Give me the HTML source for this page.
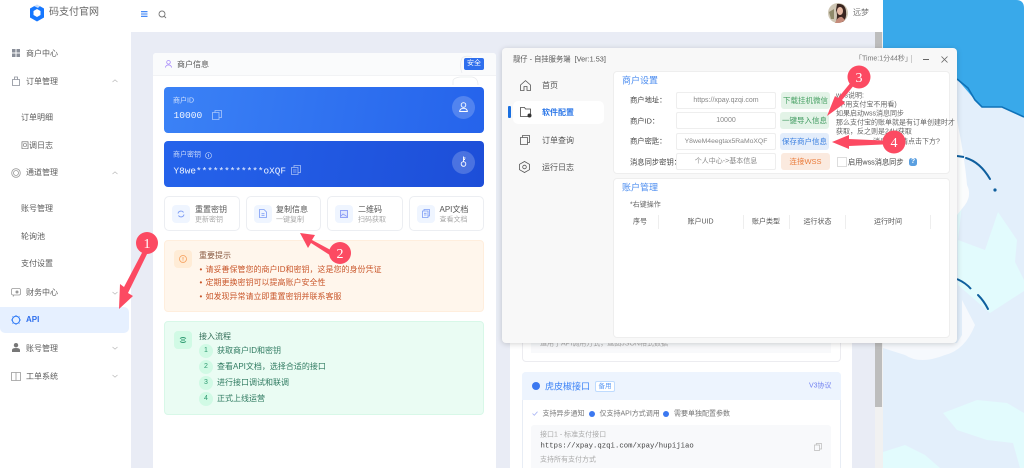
<!DOCTYPE html>
<html lang="zh"><head><meta charset="utf-8"><title>码支付官网</title>
<style>
*{box-sizing:border-box;margin:0;padding:0}
html,body{width:1024px;height:468px;overflow:hidden;background:#fff}
body{font-family:"Liberation Sans","Noto Sans CJK SC",sans-serif;position:relative;color:#555}
#w{position:absolute;left:0;top:0;width:1024px;height:468px;overflow:hidden;filter:blur(.3px)}
.a{position:absolute}
.t{position:absolute;white-space:nowrap;line-height:1;transform:translateY(-50%);font-size:8px}
.c{transform:translate(-50%,-50%);text-align:center}
.m{font-family:"Liberation Mono","Noto Sans CJK SC",monospace}
.n{color:#5c5c5c}
svg{position:absolute;overflow:visible}
.btn{position:absolute;top:196px;height:35px;background:#fff;border:1px solid #eceef2;border-radius:5px}
.sq{position:absolute;top:205px;width:18px;height:18px;background:#eff5ff;border-radius:4px}
.in{position:absolute;left:676px;width:100px;height:17px;background:#fff;border:1px solid #eeeeee;border-radius:2px;font-size:7px;color:#888;text-align:center;line-height:16px;white-space:nowrap;overflow:hidden}
.b{position:absolute;width:49px;height:17px;border-radius:3px;font-size:7.5px;text-align:center;line-height:17px;white-space:nowrap}
.num{position:absolute;left:199px;width:14px;height:14px;border-radius:50%;background:#d1fae5;color:#2c9a70;font-size:7px;line-height:14px;text-align:center}
</style></head><body><div id="w">

<!-- desktop background -->
<svg style="left:883px;top:0" width="141" height="468" viewBox="883 0 141 468">
<path d="M883 0H1016Q1024 0 1024 8V468H883Z" fill="#e3effb"/>
<path d="M883 0H1016Q1024 0 1024 8V117L1002 107H982L975 100L957 79H883Z" fill="#39a9ea"/>
<path d="M957 79L968 88L975 100L982 107L1002 107L1024 117" fill="none" stroke="#0f72b8" stroke-width="1.6"/>
<path d="M957 160Q965 185 962 205L958 240L985 250L998 212L1017 240L1015 262L1024 280V291L990 313L958 285Z" fill="#e2fbfd"/>
<path d="M957 120Q965 160 967 185Q972 195 965 205L957 215Z" fill="#fbfcfd"/>
<path d="M883 343H957L962 335L962 300L975 325Q965 350 945 355Q920 365 905 355L883 348Z" fill="#f6f9fd"/>
<path d="M943 413L977 400L1007 403L1024 413V468H1020L1013 443L987 440L957 430Z" fill="#e2fbfd"/>
<path d="M883 452L905 445L925 455L940 468H883Z" fill="#e2fbfd"/>
<path d="M957 156L964 157" stroke="#0f5f9e" stroke-width="2" fill="none"/>
<path d="M966 158Q980 162 990 179" stroke="#0f5f9e" stroke-width="2" fill="none" stroke-linecap="round"/>
<circle cx="995" cy="190" r="1.6" fill="#0f5f9e"/>
<path d="M957 279Q966 283 971 289" stroke="#0f5f9e" stroke-width="2" fill="none"/>
<path d="M978 295Q984 301 988 309" stroke="#0f5f9e" stroke-width="2" fill="none" stroke-linecap="round"/>
</svg>

<!-- app chrome -->
<div class="a" style="left:131px;top:32px;width:752px;height:436px;background:#e9ecf5"></div>
<div class="a" style="left:875px;top:32px;width:8px;height:436px;background:#f1f1f1"></div>
<div class="a" style="left:875px;top:32px;width:7px;height:375px;background:#bdbdbd"></div>
<div class="a" style="left:0;top:0;width:883px;height:32px;background:#fff"></div>
<div class="a" style="left:0;top:0;width:131px;height:468px;background:#fff"></div>

<!-- logo -->
<svg style="left:29px;top:4px" width="16" height="18" viewBox="0 0 16 18"><path d="M8 0.5L15 4.500V13.500L8 17.500L1 13.500V4.500Z" fill="#1677ff"/><path d="M8 5L11.500 7V11L8 13L4.500 11V7Z" fill="#fff"/><path d="M8 0L11 2L9 4L5 2Z" fill="#fff" opacity=".75"/></svg>
<div class="t" style="left:49px;top:13px;font-size:10px;color:#666">码支付官网</div>
<svg style="left:141px;top:11px" width="7" height="6" viewBox="0 0 7 6"><path d="M0 .7H6.500M0 3H6.500M0 5.300H6.500" stroke="#2f7bf6" stroke-width="1.100"/></svg>
<svg style="left:158px;top:10px" width="9" height="9" viewBox="0 0 9 9"><circle cx="4" cy="4" r="3" fill="none" stroke="#777" stroke-width=".9"/><path d="M6.200 6.200L8 8" stroke="#777" stroke-width=".9"/></svg>

<!-- avatar -->
<svg style="left:828px;top:3px" width="20" height="20" viewBox="0 0 20 20"><circle cx="10" cy="10" r="10" fill="#cfc7b5"/><path d="M9 1Q17 0 18 8Q19 15 15 19L8 19Q10 12 8 7Z" fill="#3a2620"/><ellipse cx="12" cy="8" rx="3" ry="4" fill="#e8bba5"/><path d="M7 20Q10 13 14 14L17 17Q14 20 10 20Z" fill="#c58b7a"/><path d="M1 9L6 6V16L3 16Z" fill="#8f8a6a"/></svg>
<div class="t" style="left:853px;top:13px;color:#777">远梦</div>

<!-- sidebar -->
<svg style="left:12px;top:49px" width="8" height="8" viewBox="0 0 8 8"><path d="M0 0H3.500V3.500H0ZM4.500 0H8V3.500H4.500ZM0 4.500H3.500V8H0ZM4.500 4.500H8V8H4.500Z" fill="#8a8f99"/></svg>
<div class="t n" style="left:26px;top:53.500px">商户中心</div>
<svg style="left:12px;top:76px" width="8" height="10" viewBox="0 0 8 10"><path d="M.5 3.500H7.500V9.500H.5ZM2.500 3.500V1H5.500V3.500" fill="none" stroke="#8a8f99" stroke-width=".8"/></svg>
<div class="t n" style="left:26px;top:81.500px">订单管理</div>
<svg style="left:112px;top:79px" width="6" height="4" viewBox="0 0 6 4"><path d="M.5 3L3 .8L5.500 3" fill="none" stroke="#bbb" stroke-width=".7"/></svg>
<div class="t n" style="left:21px;top:117.500px">订单明细</div>
<div class="t n" style="left:21px;top:145.500px">回调日志</div>
<svg style="left:11px;top:168px" width="10" height="10" viewBox="0 0 10 10"><circle cx="5" cy="5" r="4.300" fill="none" stroke="#999" stroke-width=".8"/><circle cx="5" cy="5" r="2.500" fill="none" stroke="#999" stroke-width=".8"/></svg>
<div class="t n" style="left:26px;top:173px">通道管理</div>
<svg style="left:112px;top:171px" width="6" height="4" viewBox="0 0 6 4"><path d="M.5 3L3 .8L5.500 3" fill="none" stroke="#bbb" stroke-width=".7"/></svg>
<div class="t n" style="left:21px;top:208.500px">账号管理</div>
<div class="t n" style="left:21px;top:236.500px">轮询池</div>
<div class="t n" style="left:21px;top:264px">支付设置</div>
<svg style="left:11px;top:288px" width="10" height="9" viewBox="0 0 10 9"><rect x=".5" y=".5" width="9" height="6.500" rx="1.500" fill="none" stroke="#999" stroke-width=".8"/><circle cx="6" cy="4" r="1.500" fill="#999"/><path d="M3 7L2 8.500" stroke="#999" stroke-width=".8"/></svg>
<div class="t n" style="left:26px;top:292.500px">财务中心</div>
<svg style="left:112px;top:291px" width="6" height="4" viewBox="0 0 6 4"><path d="M.5 1L3 3.200L5.500 1" fill="none" stroke="#bbb" stroke-width=".7"/></svg>
<div class="a" style="left:0;top:307px;width:129px;height:26px;background:#e6f0ff;border-radius:0 5px 5px 5px"></div>
<svg style="left:11px;top:315px" width="10" height="10" viewBox="0 0 10 10"><circle cx="5" cy="5" r="3.700" fill="none" stroke="#2f7bf6" stroke-width="1"/><path d="M5 0V1.300M5 8.700V10M0 5H1.300M8.700 5H10M1.500 1.500L2.400 2.400M7.600 7.600L8.500 8.500M8.500 1.500L7.600 2.400M2.400 7.600L1.500 8.500" stroke="#2f7bf6" stroke-width=".8"/></svg>
<div class="t" style="left:26px;top:320px;color:#2f6fed;font-weight:bold">API</div>
<svg style="left:12px;top:343px" width="8" height="9" viewBox="0 0 8 9"><circle cx="4" cy="2.200" r="2.200" fill="#777"/><path d="M0 9V7Q0 5 4 5Q8 5 8 7V9Z" fill="#777"/></svg>
<div class="t n" style="left:26px;top:348.500px">账号管理</div>
<svg style="left:112px;top:346px" width="6" height="4" viewBox="0 0 6 4"><path d="M.5 1L3 3.200L5.500 1" fill="none" stroke="#bbb" stroke-width=".7"/></svg>
<svg style="left:11px;top:372px" width="10" height="9" viewBox="0 0 10 9"><path d="M.5 .5H9.500V8.500H.5ZM5 .5V8.500" fill="none" stroke="#999" stroke-width=".8"/></svg>
<div class="t n" style="left:26px;top:376.500px">工单系统</div>
<svg style="left:112px;top:374px" width="6" height="4" viewBox="0 0 6 4"><path d="M.5 1L3 3.200L5.500 1" fill="none" stroke="#bbb" stroke-width=".7"/></svg>

<!-- merchant card -->
<div class="a" style="left:153px;top:53px;width:343px;height:415px;background:#fff;border-radius:3px 3px 0 0"></div>
<div class="a" style="left:153px;top:53px;width:343px;height:23px;background:#fafbfc;border-bottom:1px solid #f2f3f5;border-radius:3px 3px 0 0"></div>
<svg style="left:165px;top:60px" width="7" height="8" viewBox="0 0 7 8"><circle cx="3.500" cy="2.300" r="1.800" fill="none" stroke="#a78bfa" stroke-width=".8"/><path d="M.4 7.600Q.8 5 3.500 5Q6.200 5 6.600 7.600" fill="none" stroke="#a78bfa" stroke-width=".8"/></svg>
<div class="t" style="left:177px;top:64.500px;color:#555">商户信息</div>
<div class="a" style="left:464px;top:58px;width:20px;height:12px;background:#2f6fed;border-radius:2px;color:#fff;font-size:7px;line-height:12px;text-align:center">安全</div>
<svg style="left:452px;top:55px" width="28" height="32" viewBox="0 0 28 32"><path d="M1 30V26Q1 23 8 22H20Q26 23 26 30M10 18Q7 10 10 3Q14 0 20 2" fill="none" stroke="#e9ebee" stroke-width=".8"/></svg>

<div class="a" style="left:164px;top:87px;width:320px;height:45.500px;border-radius:4px;background:linear-gradient(100deg,#3b82f6,#2563eb)"></div>
<div class="t" style="left:173px;top:100.500px;color:#cfe0fd;font-size:7px">商户ID</div>
<div class="t m" style="left:173.500px;top:116px;color:#eef4ff;font-size:9.600px">10000</div>
<svg style="left:212px;top:110px" width="10" height="10" viewBox="0 0 10 10"><path d="M.5 2.500H7V9.500H.5ZM3 2.500V.5H9.500V7.500H7" fill="none" stroke="#a9c6fb" stroke-width=".8"/></svg>
<div class="a" style="left:452px;top:96px;width:23px;height:23px;border-radius:50%;background:rgba(255,255,255,.2)"></div>
<svg style="left:459px;top:102px" width="9" height="10" viewBox="0 0 9 10"><circle cx="4.500" cy="3" r="2.300" fill="none" stroke="#fff" stroke-width=".9"/><path d="M.6 9.500Q1 6.300 4.500 6.300Q8 6.300 8.400 9.500Z" fill="none" stroke="#fff" stroke-width=".9"/></svg>

<div class="a" style="left:164px;top:141px;width:320px;height:46px;border-radius:4px;background:linear-gradient(100deg,#2563eb,#1d4ed8)"></div>
<div class="t" style="left:173px;top:155px;color:#c6d7fb;font-size:7px">商户密钥</div>
<svg style="left:205px;top:151.500px" width="7" height="7" viewBox="0 0 7 7"><circle cx="3.500" cy="3.500" r="3" fill="none" stroke="#c6d7fb" stroke-width=".6"/><path d="M3.500 2V5" stroke="#c6d7fb" stroke-width=".7"/></svg>
<div class="t m" style="left:173.500px;top:170.500px;color:#eef4ff;font-size:9.400px">Y8we************oXQF</div>
<svg style="left:291px;top:165px" width="10" height="10" viewBox="0 0 10 10"><path d="M.5 2.500H7V9.500H.5ZM3 2.500V.5H9.500V7.500H7M2 5H5.500M2 7H5.500" fill="none" stroke="#a9c0f5" stroke-width=".8"/></svg>
<div class="a" style="left:452px;top:150.500px;width:23px;height:23px;border-radius:50%;background:rgba(255,255,255,.2)"></div>
<svg style="left:460px;top:156px" width="7" height="11" viewBox="0 0 7 11"><circle cx="3.500" cy="8" r="2.300" fill="none" stroke="#fff" stroke-width=".9"/><path d="M3.500 5.700V.5M3.500 2H5.500M3.500 3.500H5" stroke="#fff" stroke-width=".9"/></svg>

<div class="btn" style="left:164px;width:76px"></div>
<div class="btn" style="left:246px;width:75px"></div>
<div class="btn" style="left:327px;width:76px"></div>
<div class="btn" style="left:409px;width:75px"></div>
<div class="sq" style="left:172px"></div><div class="sq" style="left:254px"></div><div class="sq" style="left:335px"></div><div class="sq" style="left:417px"></div>
<svg style="left:177px;top:210px" width="8" height="8" viewBox="0 0 8 8"><path d="M1 3.500A3 3 0 0 1 6.500 2.500M7 4.500A3 3 0 0 1 1.500 5.500" fill="none" stroke="#7c9cf5" stroke-width=".9"/></svg>
<svg style="left:259px;top:209px" width="8" height="9" viewBox="0 0 8 9"><path d="M.5 .5H5L7.500 3V8.500H.5ZM2.500 4.500H5.500M2.500 6.300H5.500" fill="none" stroke="#7c9cf5" stroke-width=".8"/></svg>
<svg style="left:340px;top:209.500px" width="8" height="8" viewBox="0 0 8 8"><rect x=".5" y=".5" width="7" height="7" fill="#dfe6fd" stroke="#7c8ff5" stroke-width=".8"/><path d="M1 6L3 4L7 6.500" fill="none" stroke="#7c8ff5" stroke-width=".7"/></svg>
<svg style="left:422px;top:209px" width="8" height="9" viewBox="0 0 8 9"><path d="M.5 2H6V8.500H.5ZM2 2V.5H7.500V7H6M2 4.300H4.500M2 6H4.500" fill="none" stroke="#7c9cf5" stroke-width=".8"/></svg>
<div class="t" style="left:195px;top:209.500px;color:#555">重置密钥</div><div class="t" style="left:195px;top:219.500px;color:#aaa;font-size:7px">更新密钥</div>
<div class="t" style="left:276px;top:209.500px;color:#555">复制信息</div><div class="t" style="left:276px;top:219.500px;color:#aaa;font-size:7px">一键复制</div>
<div class="t" style="left:358px;top:209.500px;color:#555">二维码</div><div class="t" style="left:358px;top:219.500px;color:#aaa;font-size:7px">扫码获取</div>
<div class="t" style="left:439.500px;top:209.500px;color:#555">API文档</div><div class="t" style="left:439.500px;top:219.500px;color:#aaa;font-size:7px">查看文档</div>

<!-- notice -->
<div class="a" style="left:164px;top:240px;width:320px;height:72px;background:#fff6ec;border:1px solid #ffeedd;border-radius:4px"></div>
<div class="a" style="left:174px;top:250px;width:18px;height:18px;background:#ffecd6;border-radius:4px"></div>
<svg style="left:179px;top:255px" width="8" height="8" viewBox="0 0 8 8"><circle cx="4" cy="4" r="3.500" fill="none" stroke="#f59e5b" stroke-width=".8"/><path d="M4 2V4.800M4 5.500V6.200" stroke="#f59e5b" stroke-width=".8"/></svg>
<div class="t" style="left:199px;top:255.500px;color:#8a5b42">重要提示</div>
<div class="t" style="left:199.500px;top:269.500px;color:#c9572b;font-size:8px">• <span style="margin-left:1px">请妥善保管您的商户ID和密钥，这是您的身份凭证</span></div>
<div class="t" style="left:199.500px;top:283px;color:#c9572b;font-size:8px">• <span style="margin-left:1px">定期更换密钥可以提高账户安全性</span></div>
<div class="t" style="left:199.500px;top:297px;color:#c9572b;font-size:8px">• <span style="margin-left:1px">如发现异常请立即重置密钥并联系客服</span></div>

<!-- flow -->
<div class="a" style="left:164px;top:321px;width:320px;height:94px;background:#eafcf3;border:1px solid #d8f8e8;border-radius:4px"></div>
<div class="a" style="left:174px;top:331px;width:18px;height:18px;background:#d1fae5;border-radius:4px"></div>
<svg style="left:179px;top:336px" width="8" height="8" viewBox="0 0 8 8"><path d="M1 2.500Q4 .5 7 2.500M1 5.500Q4 7.500 7 5.500M2 4H6" fill="none" stroke="#2c9a70" stroke-width=".9"/></svg>
<div class="t" style="left:199px;top:337px;color:#2f6b55">接入流程</div>
<div class="num" style="top:344px">1</div><div class="t" style="left:217px;top:351px;color:#2f7a60">获取商户ID和密钥</div>
<div class="num" style="top:360px">2</div><div class="t" style="left:217px;top:367px;color:#2f7a60">查看API文档，选择合适的接口</div>
<div class="num" style="top:376px">3</div><div class="t" style="left:217px;top:383px;color:#2f7a60">进行接口调试和联调</div>
<div class="num" style="top:392px">4</div><div class="t" style="left:217px;top:399px;color:#2f7a60">正式上线运营</div>

<!-- right card under window -->
<div class="a" style="left:510px;top:60px;width:342px;height:408px;background:#fff"></div>
<div class="a" style="left:522px;top:300px;width:319px;height:62px;border:1px solid #ececf0;border-radius:4px"></div>
<div class="a" style="left:531px;top:330px;width:300px;height:23px;background:#f8f9fb"></div>
<div class="t" style="left:540px;top:344px;color:#aaa;font-size:7px">适用于API调用方式，返回JSON格式数据</div>
<div class="a" style="left:522px;top:372px;width:319px;height:96px;border:1px solid #e8edf5;border-bottom:0;border-radius:4px 4px 0 0"></div>
<div class="a" style="left:522px;top:372px;width:319px;height:28px;background:#edf4fe;border-radius:4px 4px 0 0"></div>
<div class="a" style="left:532px;top:382px;width:8px;height:8px;border-radius:50%;background:#3b78f0"></div>
<div class="t" style="left:545px;top:386.500px;color:#3b82f6;font-size:9px">虎皮椒接口</div>
<div class="a" style="left:595px;top:381px;width:20px;height:11px;background:#fff;border:1px solid #bfdbfe;border-radius:2px;color:#5b9af5;font-size:6.500px;text-align:center;line-height:9px">备用</div>
<div class="t" style="left:809px;top:386px;color:#6f7ff0;font-size:7px">V3协议</div>
<svg style="left:532px;top:411px" width="6" height="5" viewBox="0 0 6 5"><path d="M.5 2.500L2.300 4.300L5.500 .7" fill="none" stroke="#a9b5f5" stroke-width=".8"/></svg>
<div class="t" style="left:542.500px;top:413.500px;color:#777;font-size:7px">支持异步通知</div>
<div class="a" style="left:588.500px;top:410.500px;width:6px;height:6px;border-radius:50%;background:#3b78f0"></div>
<div class="t" style="left:599.500px;top:413.500px;color:#777;font-size:7px">仅支持API方式调用</div>
<div class="a" style="left:663px;top:410.500px;width:6px;height:6px;border-radius:50%;background:#3b78f0"></div>
<div class="t" style="left:674px;top:413.500px;color:#777;font-size:7px">需要单独配置参数</div>
<div class="a" style="left:531px;top:425px;width:300px;height:43px;background:#f8f9fb;border-radius:3px 3px 0 0"></div>
<div class="t" style="left:540px;top:434.500px;color:#aaa;font-size:7px">接口1 - 标准支付接口</div>
<div class="t m" style="left:540.500px;top:446.500px;color:#444;font-size:7.300px">https://xpay.qzqi.com/xpay/hupijiao</div>
<svg style="left:814px;top:443px" width="8" height="8" viewBox="0 0 8 8"><path d="M.5 2H5.500V7.500H.5ZM2.300 2V.5H7.500V6H5.500" fill="none" stroke="#bbb" stroke-width=".7"/></svg>
<div class="t" style="left:540px;top:459.500px;color:#aaa;font-size:7px">支持所有支付方式</div>

<!-- window -->
<div class="a" style="left:502px;top:48px;width:455px;height:295px;background:#f8f8f8;border-radius:4px;box-shadow:0 1px 6px rgba(0,0,0,.18)"></div>
<div class="t" style="left:513px;top:58.500px;color:#555;font-size:7.300px">靓仔 - 自挂服务端&nbsp; [Ver:1.53]</div>
<div class="t" style="left:855px;top:59px;color:#777;font-size:7px">「Time:1分44秒」</div>
<div class="a" style="left:911px;top:55px;width:1px;height:8px;background:#ccc"></div>
<div class="a" style="left:923px;top:59px;width:6px;height:1px;background:#666"></div>
<svg style="left:941px;top:55.500px" width="7" height="7" viewBox="0 0 7 7"><path d="M.5 .5L6.500 6.500M6.500 .5L.5 6.500" stroke="#666" stroke-width=".8"/></svg>

<svg style="left:520px;top:80px" width="11" height="11" viewBox="0 0 11 11"><path d="M.5 5L5.500 .6L10.500 5V10.500H7V6.500H4V10.500H.5Z" fill="none" stroke="#555" stroke-width=".8"/></svg>
<div class="t" style="left:542px;top:85.500px;color:#555">首页</div>
<div class="a" style="left:508px;top:106px;width:2.500px;height:12px;background:#1a6fe0;border-radius:1px"></div>
<div class="a" style="left:513px;top:101px;width:91px;height:23px;background:#fff;border-radius:5px"></div>
<svg style="left:520px;top:107px" width="12" height="11" viewBox="0 0 12 11"><path d="M.5 .5H4.500L5.500 2H10.500V9.500H.5Z" fill="none" stroke="#444" stroke-width=".8"/><circle cx="9.500" cy="8.500" r="2" fill="#333"/></svg>
<div class="t" style="left:542px;top:113px;color:#2a76e8;font-weight:bold">软件配置</div>
<svg style="left:520px;top:135px" width="10" height="10" viewBox="0 0 10 10"><path d="M.5 2.500H7.500V9.500H.5ZM2.500 2.500V.5H9.500V7.500H7.500" fill="none" stroke="#555" stroke-width=".8"/></svg>
<div class="t" style="left:542px;top:140.500px;color:#555">订单查询</div>
<svg style="left:519px;top:161px" width="11" height="12" viewBox="0 0 11 12"><path d="M5.500 .5L10.500 3.300V8.700L5.500 11.500L.5 8.700V3.300Z" fill="none" stroke="#555" stroke-width=".8"/><circle cx="5.500" cy="6" r="1.800" fill="none" stroke="#555" stroke-width=".8"/></svg>
<div class="t" style="left:542px;top:167.500px;color:#555">运行日志</div>

<div class="a" style="left:613px;top:71px;width:337px;height:103px;background:#fff;border:1px solid #eeeeee;border-radius:4px"></div>
<div class="a" style="left:613px;top:178px;width:337px;height:160px;background:#fff;border:1px solid #eeeeee;border-radius:4px"></div>
<div class="t" style="left:622px;top:81px;color:#4d8ef0;font-size:9px">商户设置</div>
<div class="t" style="left:630px;top:100px;color:#444;font-size:7.300px">商户地址：</div>
<div class="t" style="left:630px;top:120.500px;color:#444;font-size:7.300px">商户ID：</div>
<div class="t" style="left:630px;top:141px;color:#444;font-size:7.300px">商户密匙：</div>
<div class="t" style="left:630px;top:161.500px;color:#444;font-size:7.300px">消息同步密钥：</div>
<div class="in" style="top:92px">https://xpay.qzqi.com</div>
<div class="in" style="top:112px">10000</div>
<div class="in" style="top:133px;font-size:6.800px">Y8weM4eegtax5RaMoXQF</div>
<div class="in" style="top:153px">个人中心->基本信息</div>
<div class="b" style="left:781px;top:92px;background:#e3f3e7;color:#4aa266">下载挂机微信</div>
<div class="b" style="left:780px;top:112px;background:#e3f3e7;color:#3f9a5f">一键导入信息</div>
<div class="b" style="left:780px;top:133px;background:#e3edfb;color:#3a7fe0">保存商户信息</div>
<div class="b" style="left:781px;top:153px;background:#fbeadf;color:#ea7c3c">连接WSS</div>
<div class="t" style="left:836px;top:96px;color:#666;font-size:7px">wss说明:</div>
<div class="t" style="left:836px;top:105px;color:#666;font-size:7px">(不用支付宝不用看)</div>
<div class="t" style="left:836px;top:114px;color:#666;font-size:7px">如果启动wss消息同步</div>
<div class="t" style="left:836px;top:123px;color:#666;font-size:7px">那么支付宝的账单就是有订单创建时才</div>
<div class="t" style="left:836px;top:132px;color:#666;font-size:7px">获取，反之则是24H获取</div>
<div class="t" style="left:873px;top:141.500px;color:#666;font-size:7px">消息同步请点击下方?</div>
<div class="a" style="left:837px;top:157px;width:10px;height:10px;background:#fff;border:1px solid #ddd"></div>
<div class="t" style="left:848px;top:161.500px;color:#444;font-size:7.200px">启用wss消息同步</div>
<div class="a" style="left:909px;top:157.500px;width:8px;height:8px;border-radius:2.500px;background:#5a9fe0;color:#fff;font-size:7px;line-height:8px;text-align:center;font-weight:bold">?</div>
<div class="t" style="left:622px;top:188px;color:#4d8ef0;font-size:9px">账户管理</div>
<div class="t" style="left:630px;top:205px;color:#666;font-size:7px">*右键操作</div>
<div class="t c" style="left:640px;top:221.500px;color:#555;font-size:7px">序号</div>
<div class="t c" style="left:700.500px;top:221.500px;color:#555;font-size:7px">账户UID</div>
<div class="t c" style="left:766px;top:221.500px;color:#555;font-size:7px">账户类型</div>
<div class="t c" style="left:817.500px;top:221.500px;color:#555;font-size:7px">运行状态</div>
<div class="t c" style="left:888px;top:221.500px;color:#555;font-size:7px">运行时间</div>
<div class="a" style="left:658px;top:215px;width:1px;height:14px;background:#eee"></div>
<div class="a" style="left:743px;top:215px;width:1px;height:14px;background:#eee"></div>
<div class="a" style="left:789px;top:215px;width:1px;height:14px;background:#eee"></div>
<div class="a" style="left:845px;top:215px;width:1px;height:14px;background:#eee"></div>
<div class="a" style="left:930px;top:215px;width:1px;height:14px;background:#eee"></div>

<!-- annotations -->
<svg style="left:0;top:0" width="1024" height="468" viewBox="0 0 1024 468">
<g fill="#fc4a62">
<path d="M148 252L128 293L133 296L119 309L120 284L124 287L144 249Z"/>
<path d="M340 255L312 240L315 235L300 233L308 248L311 243L336 259Z"/>
<path d="M859 79L842 100L845 103L827 116L835 96L838 98L856 76Z"/>
<path d="M894 141L849 139L849 135L832 142L849 149L849 146L894 144Z"/>
<circle cx="147" cy="243" r="11"/><circle cx="340" cy="253" r="11"/><circle cx="859" cy="77" r="11.500"/><circle cx="894" cy="142" r="11.500"/>
</g>
<g fill="#fff" font-family="Liberation Serif,serif" font-size="14" text-anchor="middle">
<text x="147" y="248">1</text><text x="340" y="258">2</text><text x="859" y="82">3</text><text x="894" y="147">4</text>
</g>
</svg>
</div></body></html>
